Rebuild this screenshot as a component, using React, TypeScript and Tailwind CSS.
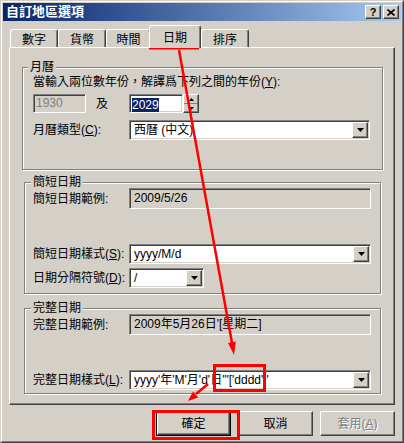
import React from "react";

const font = "font-['Liberation_Sans','Noto_Sans_CJK_TC',sans-serif]";

const sunken =
  "border border-t-[#808080] border-l-[#808080] border-r-white border-b-white shadow-[inset_1px_1px_0_#404040,inset_-1px_-1px_0_#d4d0c8]";
const raised =
  "border border-t-white border-l-white border-r-[#404040] border-b-[#404040] shadow-[inset_-1px_-1px_0_#808080] bg-[#d4d0c8]";
const etched =
  "border border-[#808080] shadow-[inset_1px_1px_0_#fff,1px_1px_0_#fff]";

function DownArrow() {
  return (
    <svg width="7" height="4" viewBox="0 0 7 4">
      <path d="M0 0h7L3.5 4z" fill="#000" />
    </svg>
  );
}

function Combo({ value, width }: { value: string; width: number }) {
  return (
    <div className={`flex h-[20px] bg-white ${sunken} p-[1px]`} style={{ width }}>
      <div className="flex-1 pl-[3px] leading-[16px] whitespace-nowrap overflow-hidden">{value}</div>
      <div className={`flex w-[16px] items-center justify-center ${raised}`}>
        <DownArrow />
      </div>
    </div>
  );
}

function ReadBox({ value }: { value: string }) {
  return (
    <div className={`h-[21px] w-[242px] bg-[#d4d0c8] ${sunken} pl-[4px] leading-[18px]`}>{value}</div>
  );
}

function Label({ text, u, rest, w = 96 }: { text: string; u?: string; rest?: string; w?: number }) {
  return (
    <span className="shrink-0" style={{ width: w }}>
      {text}
      {u && (
        <>
          (<u>{u}</u>){rest}
        </>
      )}
    </span>
  );
}

function Tab({ label, selected, w }: { label: string; selected?: boolean; w: number }) {
  return (
    <div
      className={`flex justify-center rounded-t-[3px] border-t border-l border-t-white border-l-white border-r border-r-[#404040] shadow-[inset_-1px_0_0_#808080] bg-[#d4d0c8] ${
        selected ? "relative z-10 -mb-px -ml-[2px] h-[23px] pt-[5px]" : "h-[18px] pt-[3px]"
      }`}
      style={{ width: w }}
    >
      <span className="leading-[14px]">{label}</span>
    </div>
  );
}

function Button({ label, def, disabled }: { label: React.ReactNode; def?: boolean; disabled?: boolean }) {
  if (def) {
    return (
      <div className="border border-black">
        <div className={`flex h-[23px] w-[73px] items-center justify-center ${raised}`}>{label}</div>
      </div>
    );
  }
  return (
    <div
      className={`flex h-[25px] w-[75px] items-center justify-center ${raised} ${
        disabled ? "text-[#808080] [text-shadow:1px_1px_0_#fff]" : ""
      }`}
    >
      {label}
    </div>
  );
}

export default function App() {
  return (
    <div className={`relative h-[443px] w-[404px] overflow-hidden text-[12px] text-black ${font}`}>
      <div className="h-full border border-t-[#d4d0c8] border-l-[#d4d0c8] border-r-[#404040] border-b-[#404040]">
        <div className="flex h-full flex-col border border-t-white border-l-white border-r-[#808080] border-b-[#808080] bg-[#d4d0c8] p-px">
          {/* title bar */}
          <div className="flex h-[18px] items-center bg-gradient-to-r from-[#0a246a] to-[#a6caf0] pl-[3px] pr-[2px]">
            <span className="flex-1 text-[13px] font-bold leading-[16px] text-white">自訂地區選項</span>
            <div className={`mr-[2px] flex h-[14px] w-[16px] items-center justify-center ${raised}`}>
              <span className="font-['Liberation_Sans',sans-serif] text-[11px] font-bold leading-none">?</span>
            </div>
            <div className={`flex h-[14px] w-[16px] items-center justify-center ${raised}`}>
              <svg width="8" height="7" viewBox="0 0 8 7">
                <path d="M0.5 0.5L7.5 6.5M7.5 0.5L0.5 6.5" stroke="#000" strokeWidth="1.6" />
              </svg>
            </div>
          </div>

          <div className="flex flex-1 flex-col px-[6px]">
            {/* tabs */}
            <div className="mt-[4px] flex h-[22px] items-end pl-px">
              <Tab label="數字" w={48} />
              <Tab label="貨幣" w={48} />
              <Tab label="時間" w={45} />
              <Tab label="日期" selected w={52} />
              <Tab label="排序" w={48} />
            </div>

            {/* panel */}
            <div className="flex h-[358px] flex-col border border-t-white border-l-white border-r-[#404040] border-b-[#404040] shadow-[inset_-1px_-1px_0_#808080]">
              <fieldset className={`ml-[12px] mt-[13px] h-[109px] w-[361px] pl-[10px] ${etched}`}>
                <legend className="-ml-[5px] bg-[#d4d0c8] px-[2px] leading-[12px]">月曆</legend>
                <div className="mt-[2px] leading-[14px]">
                  當輸入兩位數年份，解譯爲下列之間的年份(<u>Y</u>):
                </div>
                <div className="mt-[5px] flex h-[19px] items-center">
                  <div className={`h-[19px] w-[53px] bg-[#d4d0c8] ${sunken} pl-[2px] leading-[16px] text-[#808080]`}>
                    1930
                  </div>
                  <span className="ml-[10px] w-[33px]">及</span>
                  <div className={`h-[19px] w-[54px] bg-white ${sunken} pl-[2px] pt-px`}>
                    <span className="bg-[#0a246a] leading-[14px] text-white">2029</span>
                  </div>
                  <div className={`flex h-[19px] w-[16px] flex-col ${raised}`}>
                    <div className="flex flex-1 items-center justify-center border-b border-[#808080]">
                      <svg width="5" height="3" viewBox="0 0 5 3">
                        <path d="M0 3h5L2.5 0z" fill="#000" />
                      </svg>
                    </div>
                    <div className="flex flex-1 items-center justify-center">
                      <svg width="5" height="3" viewBox="0 0 5 3">
                        <path d="M0 0h5L2.5 3z" fill="#000" />
                      </svg>
                    </div>
                  </div>
                </div>
                <div className="mt-[7px] flex items-center">
                  <Label text="月曆類型" u="C" rest=":" />
                  <Combo value="西曆 (中文)" width={241} />
                </div>
              </fieldset>

              <fieldset className={`ml-[14px] mt-[6px] h-[118px] w-[357px] pl-[8px] ${etched}`}>
                <legend className="-ml-[2px] bg-[#d4d0c8] px-[2px] leading-[12px]">簡短日期</legend>
                <div className="flex items-center">
                  <Label text="簡短日期範例:" />
                  <ReadBox value="2009/5/26" />
                </div>
                <div className="mt-[35px] flex items-center">
                  <Label text="簡短日期樣式" u="S" rest=":" />
                  <Combo value="yyyy/M/d" width={242} />
                </div>
                <div className="mt-[4px] flex items-center">
                  <Label text="日期分隔符號" u="D" rest=":" />
                  <Combo value="/" width={75} />
                </div>
              </fieldset>

              <fieldset className={`ml-[14px] mt-[8px] h-[92px] w-[357px] pl-[8px] ${etched}`}>
                <legend className="-ml-[2px] bg-[#d4d0c8] px-[2px] leading-[12px]">完整日期</legend>
                <div className="flex items-center">
                  <Label text="完整日期範例:" />
                  <ReadBox value="2009年5月26日'[星期二]" />
                </div>
                <div className="mt-[35px] flex items-center">
                  <Label text="完整日期樣式" u="L" rest=":" />
                  <Combo value={`yyyy'年'M'月'd'日'"['dddd']'`} width={242} />
                </div>
              </fieldset>
            </div>

            {/* buttons */}
            <div className="mt-[6px] flex justify-end gap-[7px]">
              <Button label="確定" def />
              <Button label="取消" />
              <Button
                label={
                  <>
                    套用(<u>A</u>)
                  </>
                }
                disabled
              />
            </div>
          </div>
        </div>
      </div>

      {/* red annotations */}
      <svg className="pointer-events-none absolute left-0 top-0" width="404" height="443" viewBox="0 0 404 443">
        <g fill="none" stroke="#f00" strokeWidth="3">
          <rect x="150.5" y="28" width="47" height="20" />
          <rect x="214.5" y="365.5" width="50" height="25" />
          <rect x="153.5" y="411.5" width="85" height="27" />
        </g>
        <line x1="179" y1="50" x2="232" y2="343" stroke="#f00" strokeWidth="2.5" />
        <polygon points="234,355 235.8,341.5 228,342.9" fill="#f00" />
        <line x1="208" y1="384" x2="196" y2="394" stroke="#f00" strokeWidth="2.5" />
        <polygon points="188,401 198.2,397.5 193,391.4" fill="#f00" />
      </svg>
    </div>
  );
}
